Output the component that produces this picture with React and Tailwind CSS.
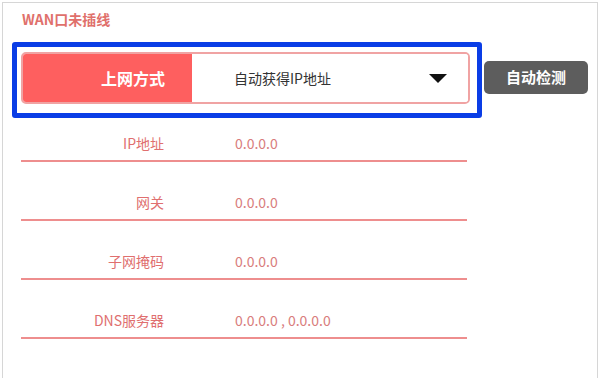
import React from "react";

const rows = [
  { label: "IP地址", value: "0.0.0.0" },
  { label: "网关", value: "0.0.0.0" },
  { label: "子网掩码", value: "0.0.0.0" },
  { label: "DNS服务器", value: "0.0.0.0 , 0.0.0.0" },
];

export default function App() {
  return (
    <div
      className="w-[600px] h-[378px] bg-white overflow-hidden pt-[2px] pl-[2px] pr-[2px]"
      style={{ fontFamily: '"Noto Sans CJK SC", "Noto Sans", sans-serif' }}
    >
      <div className="h-[420px] border border-[#d6d6d6] border-b-0">
        <div className="pl-[19px] pt-[6px] h-[20px] box-content text-[14px] leading-[20px] font-bold text-[#e0706b]">
          WAN口未插线
        </div>
        <div className="flex items-start mt-[13px] ml-[9px]">
          <div className="w-[470px] h-[76px] border-[5px] border-[#0a3de6] rounded-[3px] pl-[4px] pr-[7px] pt-[5px] pb-[9px]">
            <div className="flex h-[52px] rounded-[5px] border-2 border-[color:#f0a3a3] overflow-hidden">
              <div className="w-[171px] bg-[#fe5f5f] flex items-center justify-end pr-[27px] text-white font-bold text-[16px] -ml-[2px] -my-[2px]">
                上网方式
              </div>
              <div className="flex-1 flex items-center pl-[42px] pr-[21px] bg-white text-[14px] text-[#333]">
                <span className="flex-1">自动获得IP地址</span>
                <svg width="18" height="9" viewBox="0 0 18 9">
                  <polygon points="0,0 18,0 9,9" fill="#111" />
                </svg>
              </div>
            </div>
          </div>
          <button className="ml-[2px] mt-[19px] w-[104px] h-[33px] rounded-[5px] bg-[#5d5d5d] text-white font-bold text-[15px] flex items-center justify-center">
            自动检测
          </button>
        </div>
        <div className="ml-[18px] w-[446px]">
          {rows.map((r, i) => (
            <div
              key={r.label}
              className={`flex items-center border-b-2 border-[#ee8e8e] pb-[7px] text-[14px] leading-[20px] ${
                i === 0 ? "pt-[15px]" : "pt-[30px]"
              }`}
            >
              <div className="w-[143px] text-right text-[#e06f6f]">{r.label}</div>
              <div className="ml-[71px] text-[#d97d7d]">{r.value}</div>
            </div>
          ))}
        </div>
      </div>
    </div>
  );
}
